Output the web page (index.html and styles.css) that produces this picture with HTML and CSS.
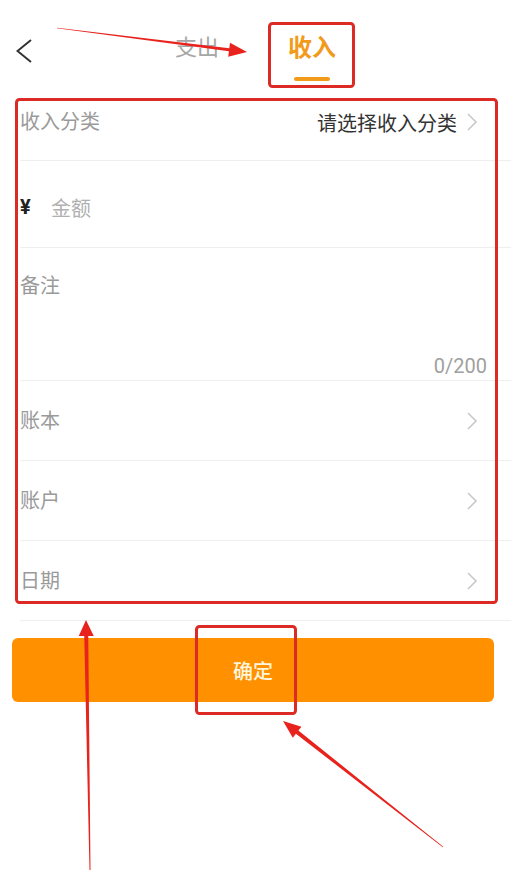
FILE: index.html
```html
<!DOCTYPE html>
<html lang="zh-CN">

<head>
  <meta charset="UTF-8" />
  <meta name="viewport" content="width=device-width, initial-scale=1.0" />
  <title>记一笔</title>
  <link rel="stylesheet" href="styles.css">
</head>

<body>
  <div class="header">
    <div class="back">
      <svg width="16" height="24" viewBox="0 0 16 24">
        <path d="M15 1 L1.5 12 L15 23" fill="none" stroke="#333" stroke-width="2" />
      </svg>
    </div>
    <div class="tabs">
      <div class="tab">支出</div>
      <div class="tab active">收入<span class="tab-line"></span></div>
    </div>
    <div></div>
  </div>

  <div class="form">
    <div class="row row-first">
      <span class="label">收入分类</span>
      <span class="value">请选择收入分类</span>
      <svg class="arrow" width="12" height="18" viewBox="0 0 12 18">
        <path d="M2 1 L10 9 L2 17" fill="none" stroke="#c8c8c8" stroke-width="1.6" />
      </svg>
    </div>
    <div class="row row-amount">
      <span class="yen">¥</span>
      <span class="placeholder">金额</span>
    </div>
    <div class="row row-note">
      <span class="label">备注</span>
      <span class="count">0/200</span>
    </div>
    <div class="row">
      <span class="label">账本</span>
      <svg class="arrow" width="12" height="18" viewBox="0 0 12 18">
        <path d="M2 1 L10 9 L2 17" fill="none" stroke="#c8c8c8" stroke-width="1.6" />
      </svg>
    </div>
    <div class="row">
      <span class="label">账户</span>
      <svg class="arrow" width="12" height="18" viewBox="0 0 12 18">
        <path d="M2 1 L10 9 L2 17" fill="none" stroke="#c8c8c8" stroke-width="1.6" />
      </svg>
    </div>
    <div class="row">
      <span class="label">日期</span>
      <svg class="arrow" width="12" height="18" viewBox="0 0 12 18">
        <path d="M2 1 L10 9 L2 17" fill="none" stroke="#c8c8c8" stroke-width="1.6" />
      </svg>
    </div>
  </div>

  <div class="submit">确定</div>

  <!-- red annotation marks on top of the screenshot -->
  <svg class="marks" width="511" height="895" viewBox="0 0 511 895">
    <rect x="269.5" y="23.5" width="84" height="63" rx="3" fill="none" stroke="#dc2a24" stroke-width="3" />
    <rect x="16.5" y="99.5" width="480" height="503" rx="3" fill="none" stroke="#dc2a24" stroke-width="3" />
    <rect x="196.5" y="626.5" width="99" height="87" rx="3" fill="none" stroke="#dc2a24" stroke-width="3" />
    <polygon fill="#e8221c"
      points="56.96,28.3 228.9,51.24 228.2,56.7 247,52 229.98,42.8 229.29,48.26 57.04,27.7" />
    <polygon fill="#e8221c"
      points="90.5,870 88.26,636 93.76,635.9 86,620 78.76,636.1 84.26,636 89.5,870" />
    <polygon fill="#e8221c"
      points="443.25,846.69 298.38,730.56 301.47,726.63 283,721 292.81,737.63 295.9,733.7 442.75,847.31" />
  </svg>
</body>

</html>
```

FILE: styles.css
```css
body {
  font-family: Roboto, "Noto Sans CJK SC", sans-serif;
  background-color: #ffffff;
  color: #333333;
  margin: 0;
  width: 511px;
  height: 895px;
  overflow: hidden;
  position: relative;
}

.header {
  display: grid;
  grid-template-columns: 1fr auto 1fr;
  height: 84px;
}

.back {
  padding: 39px 0 0 16px;
}

.back svg {
  display: block;
}

.tabs {
  display: flex;
  gap: 69px;
  padding-top: 34px;
}

.tab {
  font-size: 22px;
  line-height: 28px;
  color: #a6a6a6;
  display: flex;
  flex-direction: column;
  align-items: center;
}

.tab.active {
  font-size: 24px;
  font-weight: bold;
  color: #f29a1a;
}

.tab-line {
  display: block;
  width: 36px;
  height: 4px;
  border-radius: 2px;
  background-color: #f29a1a;
  margin-top: 15px;
}

.form {
  padding-left: 20px;
}

.row {
  display: flex;
  align-items: center;
  height: 80px;
  padding-right: 33px;
  border-bottom: 1px solid #efefef;
  font-size: 20px;
  box-sizing: border-box;
}

.row-first {
  height: 77px;
}

.row-amount {
  height: 87px;
  padding-top: 6px;
}

.row-note {
  height: 133px;
  flex-direction: column;
  align-items: stretch;
  padding: 24px 24px 0 0;
}

.label {
  color: #9a9a9a;
  flex: 1;
  line-height: 28px;
}

.value {
  color: #333333;
  margin-right: 9px;
}

.arrow {
  display: block;
}

.yen {
  color: #222222;
  font-weight: bold;
  width: 31px;
}

.placeholder {
  color: #b0b0b0;
}

.count {
  color: #a0a0a0;
  text-align: right;
  margin-top: 30px;
  line-height: 28px;
}

.submit {
  margin: 17px 17px 0 12px;
  height: 64px;
  border-radius: 6px;
  background-color: #ff9100;
  color: #fff6dc;
  font-size: 20px;
  font-weight: 500;
  display: flex;
  align-items: center;
  justify-content: center;
}

.marks {
  position: absolute;
  top: 0;
  left: 0;
  pointer-events: none;
}
```
